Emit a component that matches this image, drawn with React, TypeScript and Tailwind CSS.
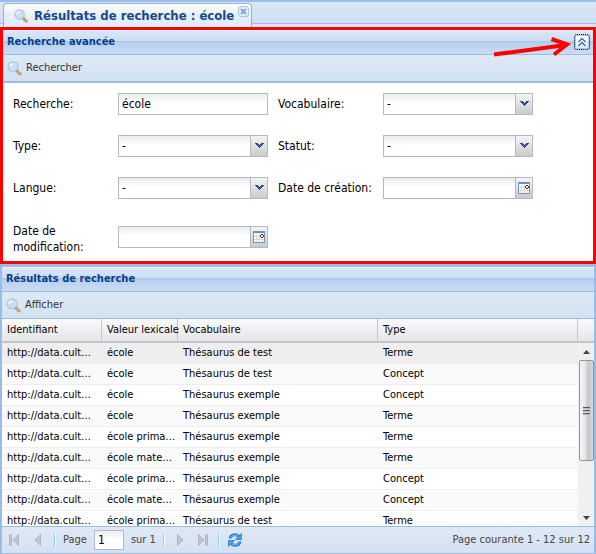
import React from "react";

const bold = "font-['DejaVu_Sans_Condensed','Noto_Sans',sans-serif] font-bold";

function Magnifier({ className = "size-4" }: { className?: string }) {
  return (
    <svg viewBox="0 0 16 16" className={className} aria-hidden="true">
      <path d="M10 10 14 14" stroke="#8a7a6a" strokeWidth="3" strokeLinecap="round" />
      <path d="M11.500 11.500 14 14" stroke="#e0a765" strokeWidth="2" strokeLinecap="round" />
      <circle cx="6.5" cy="6.2" r="5.3" fill="#c6e0f8" stroke="#b3c6e0" strokeWidth="1.400" />
      <path d="M3.300 6a3.400 3.400 0 0 1 3.400-3" stroke="#fff" strokeWidth="1.400" fill="none" />
    </svg>
  );
}

function PanelHeader({ title, children }: { title: string; children?: React.ReactNode }) {
  return (
    <header className="relative flex h-[25px] shrink-0 items-center justify-between border-b border-[#99bce8] bg-[linear-gradient(#dae7f6,#cddef3_45%,#abc7ec_46%,#abc7ec_50%,#b8cfee_54%,#cbddf3)] px-1 shadow-[inset_0_1px_0_#f3f8fd]">
      <h2 className={`${bold} text-[11px] leading-4 text-[#04408c]`}>{title}</h2>
      {children}
    </header>
  );
}

function Toolbar({ label }: { label: string }) {
  return (
    <div className="flex h-[26px] shrink-0 items-center bg-[linear-gradient(#dfe9f5,#d3e1f1)] px-1">
      <button type="button" className="flex items-center gap-1 text-[11px] leading-4 text-[#333]">
        <Magnifier className="size-[15px]" />
        {label}
      </button>
    </div>
  );
}

const fieldInput =
  "h-full w-full min-w-0 appearance-none rounded-none bg-[linear-gradient(#e9eded,#fff_9px)] px-[3px] text-[12px] leading-4 text-black outline-none";
const trigger =
  "flex w-[17px] shrink-0 items-center justify-center border-l border-[#b5b8c8] bg-[linear-gradient(#f4f4f4,#e0e0e0_50%,#cacaca)]";

function Chevron() {
  return (
    <svg viewBox="0 0 9 6" className="h-[6px] w-[9px]" aria-hidden="true" shapeRendering="crispEdges">
      <path d="M0 0h3v1h1v1h1v-1h1v-1h3v1h-1v1h-1v1h-1v1h-1v1h-1v-1h-1v-1h-1v-1h-1v-1h-1z" fill="#2f4d8a" />
    </svg>
  );
}

function CalendarIcon() {
  return (
    <svg viewBox="0 0 12 12" className="size-3" aria-hidden="true" shapeRendering="crispEdges">
      <rect width="12" height="12" fill="#6f93bf" />
      <rect x="1" y="2" width="10" height="9" fill="#fff" />
      <path d="M3.500 3v8M6.500 3v8M9.500 8v3M1 5.500h6M1 8.500h10" stroke="#d8d8d8" />
      <path d="M8 3h2v1h1v2h-1v1h-2v-1h-1v-2h1z" fill="#8b1212" />
      <rect x="8" y="4" width="2" height="2" fill="#fff" />
    </svg>
  );
}

type FieldKind = "text" | "select" | "date";
type FieldProps = { id: string; label: string; kind: FieldKind; tall?: boolean };

function Field({ id, label, kind, tall }: FieldProps) {
  return (
    <div className="flex items-center">
      <label htmlFor={id} className={`w-[105px] shrink-0 pr-1 text-[12px] leading-4 text-black ${tall ? "pt-1" : ""}`}>
        {label}
      </label>
      <div className="relative flex h-[22px] w-[150px] border border-[#b5b8c8]">
        {kind === "text" && <input id={id} type="text" defaultValue="école" className={fieldInput} />}
        {kind === "select" && (
          <>
            <select id={id} className={fieldInput}>
              <option>-</option>
            </select>
            <span className={`${trigger} pointer-events-none absolute inset-y-0 right-0`}>
              <Chevron />
            </span>
          </>
        )}
        {kind === "date" && (
          <>
            <input id={id} type="text" className={fieldInput} />
            <button type="button" aria-label="Choisir une date" className={trigger}>
              <CalendarIcon />
            </button>
          </>
        )}
      </div>
    </div>
  );
}

const fields: FieldProps[] = [
  { id: "recherche", label: "Recherche:", kind: "text" },
  { id: "vocabulaire", label: "Vocabulaire:", kind: "select" },
  { id: "type", label: "Type:", kind: "select" },
  { id: "statut", label: "Statut:", kind: "select" },
  { id: "langue", label: "Langue:", kind: "select" },
  { id: "creation", label: "Date de création:", kind: "date" },
  { id: "modification", label: "Date de modification:", kind: "date", tall: true },
];

const rows = [
  ["école", "Thésaurus de test", "Terme"],
  ["école", "Thésaurus de test", "Concept"],
  ["école", "Thésaurus exemple", "Concept"],
  ["école", "Thésaurus exemple", "Terme"],
  ["école prima…", "Thésaurus exemple", "Terme"],
  ["école mate…", "Thésaurus exemple", "Terme"],
  ["école prima…", "Thésaurus exemple", "Concept"],
  ["école mate…", "Thésaurus exemple", "Concept"],
  ["école prima…", "Thésaurus de test", "Terme"],
];

function PageButton({ label, flip, bar }: { label: string; flip?: boolean; bar?: boolean }) {
  return (
    <button type="button" aria-label={label} className="flex size-4 items-center justify-center">
      <svg viewBox="0 0 12 12" className={flip ? "size-3 -scale-x-100" : "size-3"} aria-hidden="true">
        <path d={bar ? "M1.500.5 7 6l-5.500 5.500z" : "M3.500.5 9 6l-5.500 5.500z"} fill="#c3c7cc" stroke="#a9adb3" strokeWidth="0.8" />
        {bar && <rect x="8.500" y="1" width="2" height="10" fill="#c3c7cc" stroke="#a9adb3" strokeWidth="0.8" />}
      </svg>
    </button>
  );
}

function Separator() {
  return <span className="h-[14px] w-[2px] border-l border-r border-l-[#98c8ff] border-r-white" />;
}

export default function App() {
  return (
    <div className="flex h-screen flex-col overflow-hidden bg-[#99bce8] font-['DejaVu_Sans_Condensed','Noto_Sans',sans-serif]">
      <nav className="flex h-[27px] shrink-0 items-start border-t-2 border-[#99bce8] bg-[linear-gradient(#dbe7f5,#cedff4_21px,#99bce8_21px,#99bce8_22px,#d6e4f5_22px)] pl-[3px] pt-px">
        <div className="flex h-6 items-center rounded-t-[4px] border border-b-0 border-[#8db2e3] bg-[linear-gradient(#fff,#e6eff9_50%,#deecfd)] pl-[10px] pr-[2px]">
          <button type="button" className={`${bold} flex items-center gap-[6px] text-[13px] leading-5 text-[#15498b]`}>
            <Magnifier className="size-[14px]" />
            Résultats de recherche : école
          </button>
          <button type="button" aria-label="Fermer l'onglet" className="ml-1 mt-[2px] flex size-[11px] items-center justify-center self-start rounded-[3px] border border-[#a9c3e6] bg-[#e4eefa]">
            <svg viewBox="0 0 7 7" className="size-[7px]" aria-hidden="true">
              <path d="m1 1 5 5M6 1 1 6" stroke="#86a5ce" strokeWidth="2" />
            </svg>
          </button>
        </div>
      </nav>

      <section className="flex shrink-0 flex-col border-[3px] border-[#f00] bg-white">
        <PanelHeader title="Recherche avancée">
          <button type="button" aria-label="Réduire le panneau" className="flex size-[14px] items-center justify-center rounded-[2px] border border-[#a9c8ee] bg-[linear-gradient(#fff,#deebf9)] outline-1 outline-dotted outline-black">
            <svg viewBox="0 0 10 10" className="size-[10px] shrink-0" fill="none" stroke="#3f75ad" strokeWidth="1.5" aria-hidden="true">
              <path d="M1.500 5 5 1.500 8.500 5M1.500 9 5 5.500 8.500 9" />
            </svg>
          </button>
          <svg viewBox="0 0 80 20" className="pointer-events-none absolute right-5 top-[7px] h-5 w-20" fill="none" stroke="#f00" aria-hidden="true">
            <path d="M1 17.500 73 8" strokeWidth="4" />
            <path d="M58.500 2 74 7.500 61 17.500" strokeWidth="4" />
          </svg>
        </PanelHeader>
        <Toolbar label="Rechercher" />
        <form className="grid grid-cols-[265px_1fr] gap-y-5 border-t-2 border-[#99bce8] px-[10px] pb-[6px] pt-[10px]" onSubmit={(e) => e.preventDefault()}>
          {fields.map((f) => (
            <Field key={f.id} {...f} />
          ))}
        </form>
      </section>

      <section className="flex min-h-0 flex-1 flex-col border-x-2 border-b border-t-[3px] border-[#99bce8] bg-white">
        <PanelHeader title="Résultats de recherche" />
        <Toolbar label="Afficher" />
        <div className="relative min-h-0 flex-1 overflow-hidden border-y border-[#99bce8]">
          <table className="w-full table-fixed border-separate border-spacing-0 text-left text-[11px] leading-4 text-black">
            <colgroup>
              <col className="w-[100px]" />
              <col className="w-[76px]" />
              <col className="w-[200px]" />
              <col />
              <col className="w-4" />
            </colgroup>
            <thead>
              <tr className="h-6 bg-[linear-gradient(#f9f9f9,#e3e4e6)]">
                {["Identifiant", "Valeur lexicale", "Vocabulaire", "Type"].map((h) => (
                  <th key={h} scope="col" className="whitespace-nowrap border-b-2 border-r border-[#c5c5c5] p-0 pl-[5px] font-normal">
                    {h}
                  </th>
                ))}
                <td className="border-b-2 border-[#c5c5c5] p-0" />
              </tr>
            </thead>
            <tbody>
              {rows.map((r, i) => (
                <tr key={i} className={i === 0 ? "bg-[#eee]" : i % 2 ? "bg-[#fafafa]" : "bg-white"}>
                  {["http://data.cult…", ...r].map((c, j) => (
                    <td key={j} className="h-[21px] overflow-hidden whitespace-nowrap border-b border-[#ededed] p-0 pl-[5px]">
                      {c}
                    </td>
                  ))}
                  <td className="p-0" />
                </tr>
              ))}
            </tbody>
          </table>
          <div className="absolute bottom-0 right-0 top-6 flex w-4 flex-col items-center bg-[#f0f0f0]" aria-hidden="true">
            <span className="flex h-[17px] w-full items-center justify-center">
              <svg viewBox="0 0 7 4" className="h-1 w-[7px]"><path d="M0 4 3.500 0 7 4z" fill="#444" /></svg>
            </span>
            <span className="flex h-[101px] w-[15px] flex-col items-center justify-center gap-px rounded-[2px] border border-[#959595] bg-[linear-gradient(90deg,#f6f6f6,#e5e5e7_45%,#c8c9cd_55%,#d5d5d8)]">
              {[0, 1, 2].map((n) => (
                <span key={n} className="h-[2px] w-[7px] border-t border-[#555] bg-[#bbb]" />
              ))}
            </span>
            <span className="mt-auto flex h-[17px] w-full items-center justify-center">
              <svg viewBox="0 0 7 4" className="h-1 w-[7px]"><path d="M0 0h7L3.500 4z" fill="#444" /></svg>
            </span>
          </div>
        </div>
        <footer className="flex h-[26px] shrink-0 items-center bg-[linear-gradient(#dfe9f5,#d3e1f1)] px-1 text-[11px] leading-4 text-[#444]">
          <div className="flex items-center gap-2">
            <PageButton label="Première page" flip bar />
            <PageButton label="Page précédente" flip />
          </div>
          <div className="ml-2 flex items-center gap-[7px]">
            <Separator />
            <label htmlFor="page">Page</label>
            <input id="page" type="text" defaultValue="1" className="h-5 w-[30px] border border-[#b5b8c8] bg-[linear-gradient(#eee,#fff_9px)] px-[3px] text-[12px] text-black outline-none" />
            <span>sur 1</span>
            <Separator />
            <PageButton label="Page suivante" />
            <PageButton label="Dernière page" bar />
            <Separator />
            <button type="button" aria-label="Actualiser" className="flex size-4 items-center justify-center">
              <svg viewBox="0 0 16 16" className="size-4" aria-hidden="true">
                <path d="M3 6.500C3.500 3 8.500 1 12 4.500" fill="none" stroke="#2b7fd6" strokeWidth="3" />
                <path d="M3.200 6.500C4 3.500 8.500 1.500 12 4.800" fill="none" stroke="#8cc4f5" strokeWidth="1" />
                <path d="M14.500 1.500V7.500H8.500z" fill="#4a9fe8" stroke="#2b7fd6" strokeWidth="0.8" />
                <path d="M13 9.500C12.500 13 7.500 15 4 11.500" fill="none" stroke="#2b7fd6" strokeWidth="3" />
                <path d="M12.800 9.500C12 12.500 7.500 14.500 4 11.200" fill="none" stroke="#8cc4f5" strokeWidth="1" />
                <path d="M1.500 14.500V8.500H7.500z" fill="#4a9fe8" stroke="#2b7fd6" strokeWidth="0.8" />
              </svg>
            </button>
          </div>
          <p className="ml-auto whitespace-nowrap">Page courante 1 - 12 sur 12</p>
        </footer>
      </section>
    </div>
  );
}
